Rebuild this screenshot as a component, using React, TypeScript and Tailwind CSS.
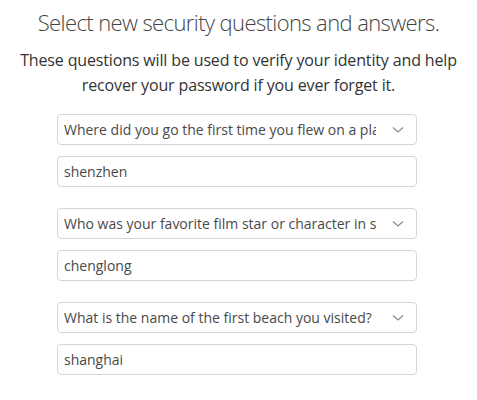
import React from "react";

const groups = [
  { q: "Where did you go the first time you flew on a plane?", a: "shenzhen" },
  { q: "Who was your favorite film star or character in school?", a: "chenglong" },
  { q: "What is the name of the first beach you visited?", a: "shanghai" },
];

function Chevron() {
  return (
    <svg width="12" height="8" viewBox="0 0 12 8" className="shrink-0">
      <path d="M1 1.5 L6 6 L11 1.5" fill="none" stroke="#8a8a8a" strokeWidth="1.2" />
    </svg>
  );
}

export default function App() {
  return (
    <div
      className="w-[477px] h-[400px] bg-white flex flex-col items-center"
      style={{ fontFamily: '"Open Sans", "Noto Sans", sans-serif' }}
    >
      <h1 className="mt-[7px] text-[22px] leading-[30px] font-light text-[#444] tracking-[-0.6px]">
        Select new security questions and answers.
      </h1>
      <p className="mt-[11px] text-[16px] leading-[25px] text-[#333] text-center tracking-[-0.15px]">
        These questions will be used to verify your identity and help
        <br />
        recover your password if you ever forget it.
      </p>
      <div className="mt-[16px] flex flex-col gap-[21px] w-[360px] self-start ml-[57px]">
        {groups.map((g, i) => (
          <div key={i} className="flex flex-col gap-[11px]">
            <div className="h-[31px] border border-[#d6d6d6] rounded-[4px] flex items-center pl-[6px] pr-[12px]">
              <span className="flex-1 overflow-hidden whitespace-nowrap text-[14px] text-[#494949] mr-[16px]">
                {g.q}
              </span>
              <Chevron />
            </div>
            <div className="h-[31px] border border-[#d6d6d6] rounded-[4px] flex items-center pl-[6px]">
              <span className="text-[14px] text-[#494949]">{g.a}</span>
            </div>
          </div>
        ))}
      </div>
    </div>
  );
}
